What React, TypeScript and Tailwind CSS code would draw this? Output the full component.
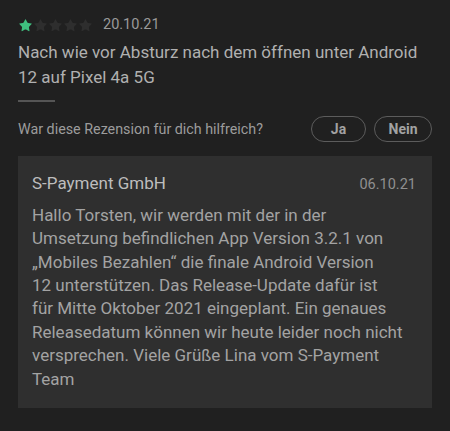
import { Star } from 'lucide-react';

function Stars({ value }: { value: number }) {
  return (
    <div className="flex items-center">
      {Array.from({ length: 5 }).map((_, i) => (
        <Star
          key={i}
          size={15}
          strokeWidth={0}
          className={i < value ? 'fill-[#3fbf7f]' : 'fill-[#2e2e2e]'}
          aria-hidden
        />
      ))}
    </div>
  );
}

export default function App() {
  return (
    <div className="min-h-[431px] bg-[#202020] px-[18px] pt-[16px] text-[#a9a9a9] [font-family:Roboto,'Noto_Sans',sans-serif]">
      {/* Rating + date */}
      <div className="flex h-[18px] items-center gap-[10px]">
        <Stars value={1} />
        <span className="text-[14.5px] leading-[18px] text-[#9a9a9a]">20.10.21</span>
      </div>

      {/* Review body */}
      <p className="mt-[6px] text-[17px] leading-[25px] text-[#b0b0b0]">
        Nach wie vor Absturz nach dem öffnen unter Android 12 auf Pixel 4a 5G
      </p>

      <div className="mt-[10px] h-[2px] w-[37px] bg-[#555555]" />

      {/* Helpful? */}
      <div className="mt-[14px] flex h-[26px] items-center">
        <span className="flex-1 text-[14.3px] leading-[20px] text-[#9c9c9c]">War diese Rezension für dich hilfreich?</span>
        <div className="flex gap-[8px]">
          <button className="h-[26px] w-[55px] rounded-full border border-[#5c5c5c] text-[14px] leading-[20px] font-bold text-[#a2a2a2]">
            Ja
          </button>
          <button className="h-[26px] w-[58px] rounded-full border border-[#5c5c5c] text-[14px] leading-[20px] font-bold text-[#a2a2a2]">
            Nein
          </button>
        </div>
      </div>

      {/* Developer reply */}
      <div className="mt-[14px] bg-[#2f2f2f] pb-[17px] pl-[14px] pr-[16px] pt-[16px]">
        <div className="flex items-baseline justify-between">
          <span className="text-[17px] leading-[22px] text-[#bdbdbd]">S-Payment GmbH</span>
          <span className="text-[14.5px] text-[#8f8f8f]">06.10.21</span>
        </div>
        <p className="mt-[8px] text-[17px] leading-[23.4px] text-[#a3a3a3]">
          Hallo Torsten, wir werden mit der in der Umsetzung befindlichen App Version 3.2.1 von
          „Mobiles Bezahlen“ die finale Android Version
          <br />
          12 unterstützen. Das Release-Update dafür ist
          <br />
          für Mitte Oktober 2021 eingeplant. Ein genaues Releasedatum können wir heute leider noch
          nicht versprechen. Viele Grüße Lina vom S-Payment Team
        </p>
      </div>
    </div>
  );
}
